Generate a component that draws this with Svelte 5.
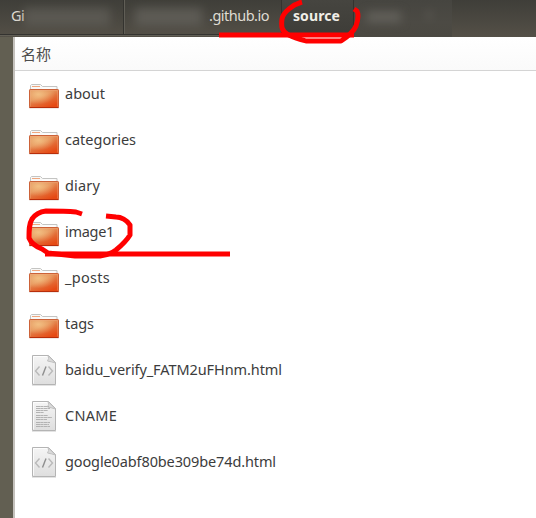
<script>
  const entries = [
    { name: 'about', kind: 'folder', width: 40 },
    { name: 'categories', kind: 'folder', width: 71 },
    { name: 'diary', kind: 'folder', width: 35 },
    { name: 'image1', kind: 'folder', width: 49 },
    { name: '_posts', kind: 'folder', width: 45 },
    { name: 'tags', kind: 'folder', width: 29 },
    { name: 'baidu_verify_FATM2uFHnm.html', kind: 'code', width: 217 },
    { name: 'CNAME', kind: 'text', width: 52 },
    { name: 'google0abf80be309be74d.html', kind: 'code', width: 211 },
  ];

  function fit(node, width) {
    const natural = node.getBoundingClientRect().width;
    node.style.letterSpacing = `${(width - natural) / node.textContent.length}px`;
  }
</script>

<main class="window">
  <nav class="pathbar">
    <div class="crumb first"><span use:fit={13}>Gi</span><i class="smudge wide"></i></div>
    <div class="crumb second"><i class="smudge user"></i><span use:fit={60}>.github.io</span></div>
    <div class="crumb active"><span use:fit={47}>source</span></div>
    <div class="crumb last"><i class="smudge short"></i><i class="smudge dot"></i></div>
  </nav>
  <div class="body">
    <aside></aside>
    <section>
      <header>名称</header>
      <ul>
        {#each entries as entry}
          <li>
            {#if entry.kind === 'folder'}
              <svg class="icon folder" width="32" height="28" viewBox="0 0 32 28">
                <defs>
                  <linearGradient id="fold" x1="0" y1="0" x2=".65" y2="1">
                    <stop offset="0" stop-color="#df8a55" /><stop offset=".45" stop-color="#e58d55" />
                    <stop offset=".65" stop-color="#e3703a" /><stop offset="1" stop-color="#e64a14" />
                  </linearGradient>
                  <radialGradient id="shine" cx=".3" cy=".25" r=".6">
                    <stop offset="0" stop-color="#f7d092" stop-opacity=".75" /><stop offset="1" stop-color="#f7d092" stop-opacity="0" />
                  </radialGradient>
                </defs>
                <path d="M2.500 10V3.500l1-1h9l2 2h14.500v6z" fill="#f8f8f7" stroke="#c4c4c2" />
                <path d="M4 4.500h8" stroke="#efa77f" />
                <path d="M14 6h13" stroke="#fff" />
                <rect x="1" y="25" width="30" height="1.500" rx=".7" fill="#c9a89d" opacity=".5" />
                <rect x="1.500" y="7.500" width="29" height="18" rx=".7" fill="url(#fold)" stroke="#cc6238" />
                <rect x="2" y="8" width="28" height="17" fill="url(#shine)" />
                <path d="M2.500 24.500v-16h27v16" fill="none" stroke="#f3b083" stroke-opacity=".35" />
                <path d="M1.500 25.500h29" stroke="#b82e0b" />
              </svg>
            {:else}
              <svg class="icon" width="32" height="34" viewBox="0 0 32 34">
                <defs>
                  <linearGradient id="paper" x1="0" y1="0" x2="0" y2="1">
                    <stop offset="0" stop-color="#f5f5f5" /><stop offset="1" stop-color="#dedede" />
                  </linearGradient>
                </defs>
                <path d="M4 32.500h24" stroke="#e3e3e3" />
                <path d="M4.500 2.500h16l7 7v22h-23z" fill="url(#paper)" stroke="#b4b4b4" />
                <path d="M5.500 30.500v-27h14" fill="none" stroke="#fff" stroke-opacity=".8" />
                <path d="M20 2.500q1.500 3-.5 5.500 4 .800 8 2z" fill="#dadada" stroke="#b8b8b8" stroke-width=".8" />
                {#if entry.kind === 'code'}
                  <path d="m11.500 13.500-4 4.500 4 4.500m9-9 4 4.500-4 4.500" fill="none" stroke="#b9b9b9" stroke-width="1.400" />
                  <path d="m18 13.500-3.500 9" stroke="#8e8e8e" stroke-width="1.400" />
                {:else}
                  <path d="M8 7.500h13M8 9.500h14M8 11.500h12M8 13.500h8M8 16.500h12M8 18.500h16M8 20.500h11M8 23.500h14M8 25.500h13M8 27.500h14" stroke="#b3b3b3" stroke-dasharray="4 .3 3 .3" />
                {/if}
              </svg>
            {/if}
            <span use:fit={entry.width}>{entry.name}</span>
          </li>
        {/each}
      </ul>
    </section>
  </div>
  <svg class="marks" width="536" height="518" viewBox="0 0 536 518">
    <path d="M219 35H354" />
    <path d="M302 2C294 4 283 12 282 19C281 27 282 31 287 34C293 38 300 39 306 41H341C347 37 354 31 356 26C358 20 359 15 357 11L354 9" />
    <path d="M45 254H230" />
    <path d="M82 214L76 212C66 211 55 211 46 211C38 212 34 216 32 219C29 224 29 230 29 238C31 243 37 247 42 249L48 253L75 256H100C107 255 112 253 116 250C122 245 127 240 130 235V225C127 220 121 217 116 217L106 216" />
  </svg>
</main>

<style>
  .window {
    position: relative;
    width: 536px;
    height: 518px;
    overflow: hidden;
    display: flex;
    flex-direction: column;
    background: #fff;
    color: #3c3c3c;
    font: 14.5px "Noto Sans", sans-serif;
  }
  .pathbar {
    display: flex;
    flex: 0 0 37px;
    box-sizing: border-box;
    background: linear-gradient(#3f3e39, #545047);
    color: #dfdbd2;
  }
  .crumb {
    display: flex;
    align-items: center;
    box-sizing: border-box;
    height: 35px;
    padding-bottom: 5px;
    border-right: 1px solid #34332f;
    border-bottom: 1px solid #343330;
    box-shadow: 1px 0 #605e56, 0 1px #625f56;
    white-space: nowrap;
  }
  .first { width: 124px; padding-left: 11px; }
  .second { width: 158px; }
  .active {
    width: 72px;
    padding: 0 0 4px 11px;
    background: linear-gradient(#464540, #3e3d38);
    font-weight: 700;
    font-size: 14px;
    color: #f1eee7;
  }
  .last { width: 98px; height: 37px; border: 0; box-shadow: none; background: linear-gradient(#464540, #4c4a44 60%, #4b4942); }
  .smudge { display: block; height: 18px; margin-top: 4px; background: #64625c; filter: blur(5px); }
  .wide { width: 86px; opacity: .65; }
  .user { width: 67px; margin: 4px 7px 0 11px; opacity: .75; }
  .short { width: 34px; height: 10px; margin: 1px 0 0 13px; }
  .dot { width: 6px; height: 8px; margin: 0 0 3px 25px; opacity: .6; }
  .body { display: flex; flex: 1; }
  aside { width: 13px; background: #625f52; border-right: 2px solid #c4c1bc; }
  section { flex: 1; min-width: 0; }
  header {
    height: 34px;
    box-sizing: border-box;
    padding-left: 6px;
    border-bottom: 1px solid #d4d4d4;
    background: linear-gradient(#fff, #fafafa);
    font: 15px/33px "Noto Sans CJK SC", sans-serif;
    color: #4c4c4c;
  }
  ul { list-style: none; margin: 0; padding: 0; }
  li { display: flex; align-items: center; height: 46px; padding-left: 13px; white-space: nowrap; }
  .icon { flex: none; margin-right: 5px; }
  .folder { margin-top: 4px; }
  li span { margin-top: -3px; }
  .marks { position: absolute; inset: 0; pointer-events: none; }
  .marks path { fill: none; stroke: #f00; stroke-width: 5; stroke-linejoin: round; }
</style>
